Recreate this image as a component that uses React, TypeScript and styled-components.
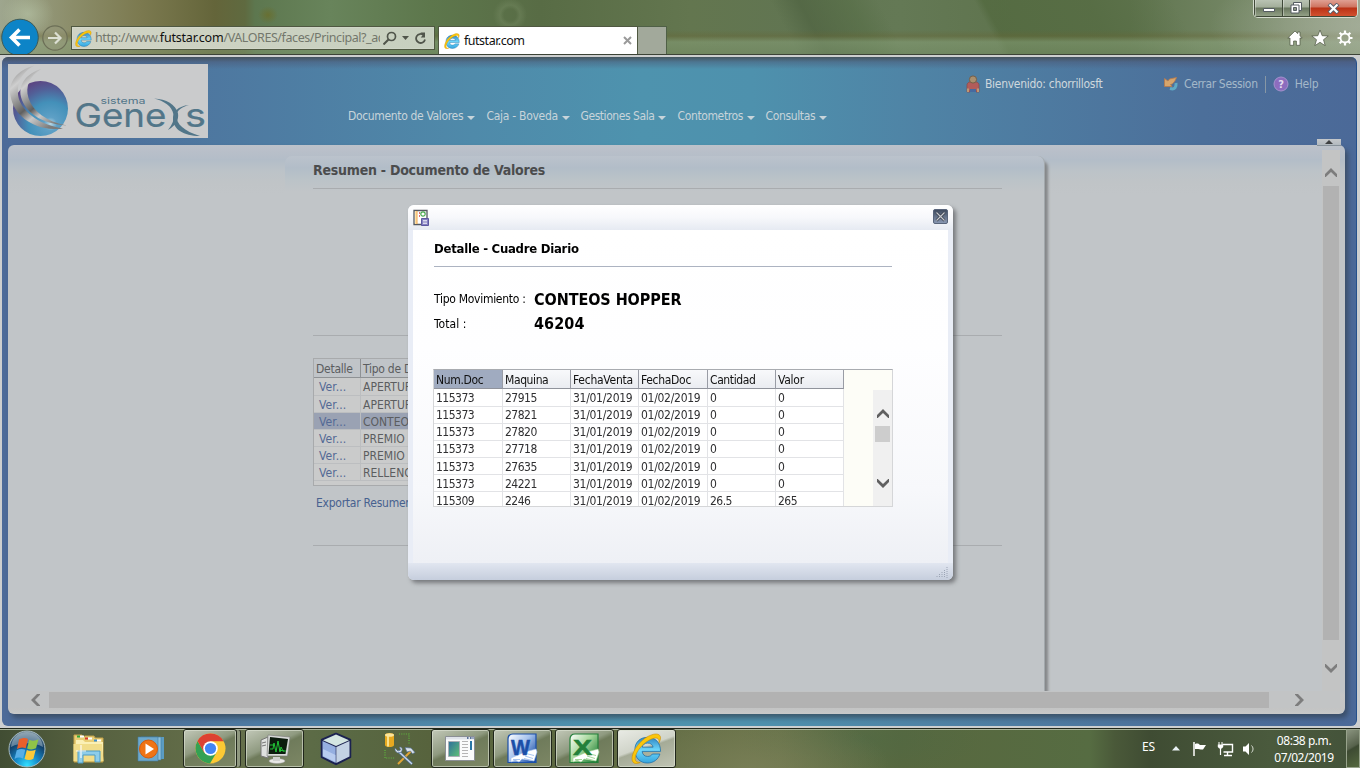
import React from "react";
import styled, { createGlobalStyle } from "styled-components";

const GlobalStyle = createGlobalStyle`
  * { box-sizing: border-box; }
  html, body { margin: 0; padding: 0; }
  body { width: 1360px; height: 768px; overflow: hidden; font-family: "DejaVu Sans Condensed", "DejaVu Sans", sans-serif; font-stretch: condensed; }
  svg { display: block; flex: none; }
`;

const Screen = styled.div`
  width: 1360px;
  height: 768px;
  display: flex;
  flex-direction: column;
  overflow: hidden;
  background: #c8cacb;
`;

/* ---------- browser chrome ---------- */

const Chrome = styled.header`
  position: relative;
  height: 54px;
  flex: none;
  display: flex;
  align-items: flex-start;
  background:
    radial-gradient(ellipse 26px 22px at 28px 14px, rgba(190, 205, 175, 0.5), transparent),
    radial-gradient(ellipse 10px 9px at 268px 15px, rgba(110, 105, 30, 0.6), transparent),
    radial-gradient(circle at 510px 15px, transparent 6px, rgba(130, 150, 110, 0.3) 10px, transparent 17px),
    radial-gradient(ellipse 150px 60px at 1360px 25px, rgba(165, 175, 155, 0.75), transparent),
    linear-gradient(180deg, transparent 30px, rgba(104, 100, 50, 0.35) 36px, rgba(140, 165, 125, 0.5) 42px, rgba(130, 155, 115, 0.45) 54px),
    linear-gradient(62deg, transparent 705px, rgba(76, 96, 62, 0.6) 730px, rgba(84, 108, 68, 0.5) 775px, transparent 800px, transparent 885px, rgba(80, 103, 60, 0.65) 893px, rgba(80, 103, 60, 0.5) 985px, transparent 1060px),
    linear-gradient(90deg, #9ea68e 0, #8c8e6b 70px, #7c7a50 140px, #64653a 215px, #5f6a40 245px, #5d774f 255px, #68845b 330px, #5d774c 430px, #586c45 540px, #63764f 690px, #617552 800px, #647955 900px, #5f744e 1010px, #5f744e 1130px, #788a69 1260px, #98a189 1360px);
`;

const BackButton = styled.div`
  width: 38px;
  height: 54px;
  margin-left: 1px;
  overflow: hidden;
`;

const ForwardButton = styled.div`
  margin: 25px 0 0 3px;
  width: 26px;
`;

const AddressBar = styled.div`
  width: 364px;
  height: 24px;
  margin: 26px 0 0 3px;
  padding: 0 5px 0 3px;
  display: flex;
  align-items: center;
  border: 1px solid #4f5841;
  background: linear-gradient(90deg, #d0d3c4, #c7d0bf);
  box-shadow: 0 0 0 1px rgba(255, 255, 255, 0.12) inset;
`;

const Url = styled.div`
  margin-left: 3px;
  width: 285px;
  overflow: hidden;
  white-space: nowrap;
  font: 12.5px/22px "Noto Sans", sans-serif;
  letter-spacing: -0.42px;
  color: #73776c;
  b { font-weight: 400; color: #101010; letter-spacing: -0.2px; }
`;

const UrlTools = styled.div`
  display: flex;
  align-items: center;
  gap: 5px;
  margin-left: 3px;
`;

const Tab = styled.div`
  width: 200px;
  height: 28px;
  margin: 26px 0 0 3px;
  padding: 0 5px 0 5px;
  display: flex;
  align-items: center;
  border: 1px solid #4f5841;
  border-bottom: 0;
  background: #fff;
`;

const TabTitle = styled.span`
  flex: 1;
  margin-left: 4px;
  font: 12.5px/27px "Noto Sans", sans-serif;
  letter-spacing: -0.48px;
  color: #111;
`;

const NewTab = styled.div`
  width: 29px;
  height: 28px;
  margin-top: 26px;
  border: 1px solid #4f6046;
  border-left: 0;
  border-bottom: 0;
  background: #a2a99b;
`;

const ChromeRight = styled.div`
  width: 108px;
  margin: 0 2px 0 auto;
  display: flex;
  flex-direction: column;
  align-items: flex-end;
`;

const WindowButtons = styled.div`
  display: flex;
  width: 105px;
  height: 18px;
  overflow: hidden;
  border: 1px solid #d5dccf;
  border-top: 0;
  border-radius: 0 0 5px 5px;
`;

const WindowButton = styled.div<{ $w: number; $close?: boolean }>`
  width: ${(p) => p.$w}px;
  display: flex;
  align-items: center;
  justify-content: center;
  border: 1px solid #3f4938;
  border-top: 0;
  border-right-width: 0;
  background: ${(p) =>
    p.$close
      ? "linear-gradient(180deg, #e0a093 0, #ce7460 7px, #ba3216 8px, #d2512f 100%)"
      : "linear-gradient(180deg, #b9c3b3 0, #a3ae9b 7px, #69775e 8px, #92a086 100%)"};
  box-shadow: inset 1px 0 0 rgba(255, 255, 255, 0.35);
`;

const ChromeIcons = styled.div`
  display: flex;
  gap: 8px;
  margin: 12px 5px 0 0;
`;

/* ---------- application page ---------- */

const Page = styled.main`
  height: 674px;
  flex: none;
  padding: 3px 3px 2px 2px;
  border-top: 1px solid #3c4336;
  background: #cdcfcf;
`;

const AppShell = styled.div`
  position: relative;
  height: 669px;
  margin-top: -1px;
  padding: 0 12px 0 6px;
  border-radius: 6px;
  border-right: 1px solid #24508c;
  background:
    linear-gradient(180deg, rgba(68, 76, 82, 0.85) 0, rgba(75, 84, 112, 0.45) 5px, transparent 12px),
    linear-gradient(90deg, #4d6b99 0, #4d6d9a 60px, #4f8aaa 470px, #4e93ae 640px, #4e91ad 750px, #4f83a5 920px, #4c6f9a 1200px, #4b6998 1356px);
`;

const Masthead = styled.div`
  height: 88px;
  display: flex;
`;

const Logo = styled.div`
  margin-top: 7px;
  width: 200px;
  height: 74px;
  background: #cacbcc;
`;

const MastContent = styled.div`
  flex: 1;
  display: flex;
  flex-direction: column;
`;

const UserRow = styled.div`
  display: flex;
  align-items: center;
  height: 20px;
  margin: 17px 0 0 757px;
  font-size: 12px;
  letter-spacing: -0.29px;
  white-space: nowrap;
  color: #ced8dd;
`;

const UserName = styled.span`
  width: 178px;
  margin-left: 4px;
`;

const MastLink = styled.span<{ $ml: number; $ls?: number }>`
  margin-left: ${(p) => p.$ml}px;
  letter-spacing: ${(p) => p.$ls ?? -0.35}px;
  color: #a4b8c9;
`;

const LinkDivider = styled.i`
  width: 1px;
  height: 17px;
  margin: 0 7px 0 7px;
  background: #8797a5;
`;

const Menu = styled.nav`
  display: flex;
  margin: 12px 0 0 140px;
  font-size: 12px;
  line-height: 20px;
  color: #c7d4da;
  white-space: nowrap;
`;

const MenuItem = styled.span<{ $w: number; $ls: number }>`
  width: ${(p) => p.$w}px;
  letter-spacing: ${(p) => p.$ls}px;
  display: flex;
  align-items: center;
  &::after {
    content: "";
    margin: 4px 0 0 4px;
    border: 4px solid transparent;
    border-bottom-width: 0;
    border-top-color: #c7d4da;
  }
`;

const Panel = styled.section`
  height: 569px;
  width: 1337px;
  display: grid;
  grid-template-columns: 1314px 18px;
  grid-template-rows: 541px 17px;
  padding-top: 5px;
  border-radius: 6px;
  overflow: hidden;
  background: linear-gradient(180deg, #bdc2ca 0, #b8bfc9 7px, #b3bdc8 15px, #bcc3c8 26px, #c0c4c7 38px, #c1c5c8 50px, #c1c5c8 546px, #c5c6c7 550px, #c3c4c4 564px, #c8c9c9 569px);
  box-shadow: 3px 4px 5px rgba(50, 65, 80, 0.65);
`;

const PanelBody = styled.div`
  padding: 6px 0 0 277px;
  overflow: hidden;
`;

const Card = styled.div`
  width: 760px;
  height: 540px;
  padding: 3px 42px 0 28px;
  border-radius: 7px 7px 0 0;
  border-right: 1px solid #a2a8ac;
  background: linear-gradient(180deg, #bbc3cc 0, #b2bdc8 12px, #bbc3c8 24px, #c1c5c8 36px);
  box-shadow: 4px 4px 3px -1px #858789;
  font-size: 12px;
`;

const CardTitle = styled.h1`
  height: 30px;
  margin: 0;
  border-bottom: 1px solid #a9acaf;
  font-size: 14px;
  font-weight: 700;
  line-height: 22px;
  letter-spacing: -0.24px;
  color: #4b4c4d;
`;

const CardGap = styled.div<{ $h: number }>`
  height: ${(p) => p.$h}px;
  border-bottom: 1px solid #a9acaf;
`;

const Summary = styled.div`
  width: 400px;
  height: 128px;
  margin-top: 22px;
  border: 1px solid #a8aaac;
  background: #cacbcb;
`;

const SummaryRow = styled.div<{ $head?: boolean; $active?: boolean; $h: number; $lh?: number }>`
  height: ${(p) => p.$h}px;
  display: grid;
  grid-template-columns: 47px 1fr;
  grid-template-rows: 100%;
  line-height: ${(p) => p.$lh ?? p.$h}px;
  letter-spacing: ${(p) => (p.$head ? -0.25 : 0)}px;
  white-space: nowrap;
  color: #5b5d5f;
  border-bottom: 1px solid ${(p) => (p.$head ? "#8f9295" : "#bcbec0")};
  background: ${(p) => (p.$active ? "#9aa2b3" : p.$head ? "#c0c4c8" : "transparent")};
`;

const SummaryCell = styled.span<{ $link?: boolean; $head?: boolean }>`
  padding-left: ${(p) => (p.$link ? 5 : 2)}px;
  border-right: 1px solid ${(p) => (p.$head ? "#8f9295" : "#bcbec0")};
  overflow: hidden;
  color: ${(p) => (p.$link ? "#536995" : "inherit")};
  letter-spacing: ${(p) => (p.$link ? "0.1px" : "inherit")};
`;

const ExportLink = styled.div`
  height: 60px;
  padding: 9px 0 0 3px;
  line-height: 16px;
  letter-spacing: -0.25px;
  border-bottom: 1px solid #a9acaf;
  color: #47618f;
`;

const VScroll = styled.div`
  height: 541px;
  display: flex;
  flex-direction: column;
  align-items: center;
  background: #c3c4c4;
`;

const HScroll = styled.div`
  grid-column: 1 / 3;
  display: flex;
  align-items: center;
  background: #c2c4c5;
`;

const VThumb = styled.div`
  width: 16px;
  height: 454px;
  margin: 9px 0 24px;
  background: #b2b2b2;
`;

const HThumb = styled.div`
  width: 1220px;
  height: 16px;
  margin: 0 26px 0 9px;
  background: #b2b2b2;
`;

const Collapser = styled.div`
  position: absolute;
  left: 1315px;
  top: 82px;
  width: 24px;
  height: 7px;
  display: flex;
  align-items: center;
  justify-content: center;
  background: linear-gradient(#c4c7ca, #b2b9bf);
  border-bottom: 1px solid #87919a;
`;

/* ---------- dialog ---------- */

const Dialog = styled.div`
  position: absolute;
  left: 406px;
  top: 148px;
  width: 545px;
  height: 375px;
  display: flex;
  flex-direction: column;
  border-radius: 6px;
  overflow: hidden;
  background: #e9edf6;
  filter: drop-shadow(3px 3px 2px rgba(70, 72, 75, 0.6));
`;

const DialogHeader = styled.div`
  height: 25px;
  padding: 4px 5px 0;
  display: flex;
  justify-content: space-between;
  background: linear-gradient(#ffffff, #f7f8fb 50%, #e6eaf2);
`;

const DialogBody = styled.div`
  height: 333px;
  margin: 0 5px;
  padding: 7px 56px 0 21px;
  background: linear-gradient(#ffffff 0, #fefeff 120px, #f7f8fb 260px, #eef0f5 333px);
`;

const DialogFooter = styled.div`
  height: 17px;
  display: flex;
  justify-content: flex-end;
  padding: 3px 5px 0 0;
  background: linear-gradient(#e1e6f0, #c6cedd);
`;

const DialogTitle = styled.h2`
  height: 30px;
  margin: 0;
  border-bottom: 1px solid #acb3c1;
  font-size: 13px;
  line-height: 23px;
  font-weight: 700;
  letter-spacing: -0.25px;
  color: #000;
`;

const Fields = styled.dl`
  display: grid;
  grid-template-columns: 100px 1fr;
  grid-auto-rows: 24.5px;
  align-items: center;
  margin: 20px 0 33px;
  color: #000;
`;

const FieldName = styled.dt<{ $ls: number }>`
  font-size: 12px;
  white-space: nowrap;
  letter-spacing: ${(p) => p.$ls}px;
`;

const FieldValue = styled.dd<{ $ls: number }>`
  margin: 0;
  font-size: 16px;
  font-weight: 700;
  white-space: nowrap;
  letter-spacing: ${(p) => p.$ls}px;
`;

const Grid = styled.div`
  width: 460px;
  height: 138px;
  margin-left: -1px;
  display: flex;
  border: 1px solid #d5d6d8;
  border-top-color: #a8abb0;
  background: #fdfdf7;
  overflow: hidden;
  font-size: 12px;
`;

const GridColumns = styled.div`
  width: 410px;
`;

const GridRow = styled.div<{ $h: number }>`
  height: ${(p) => p.$h}px;
  display: grid;
  grid-template-columns: 69px 68px 68px 69px 68px 68px;
  grid-template-rows: 100%;
  background: #fff;
`;

const HeadCell = styled.span<{ $selected?: boolean; $ls: number }>`
  padding-left: 2px;
  line-height: 20px;
  letter-spacing: ${(p) => p.$ls}px;
  white-space: nowrap;
  color: #111;
  border-right: 1px solid #999ca5;
  border-bottom: 1px solid #90939c;
  background: ${(p) => (p.$selected ? "#a0abc0" : "linear-gradient(#f8f9fb, #eaecf1)")};
`;

const Cell = styled.span<{ $lh: number; $ls?: number }>`
  padding: 0 0 0 2px;
  line-height: ${(p) => p.$lh}px;
  letter-spacing: ${(p) => p.$ls ?? -0.52}px;
  white-space: nowrap;
  color: #2f2f31;
  border-right: 1px solid #e2e3e6;
  border-bottom: 1px solid #e2e3e6;
`;

const GridScroll = styled.div`
  width: 19px;
  margin: 20px 0 0 auto;
  padding-top: 18px;
  display: flex;
  flex-direction: column;
  align-items: center;
  background: #f0f0f0;
`;

const GridThumb = styled.div`
  width: 15px;
  height: 16px;
  margin: 8px 0 37px;
  background: #cdcdcd;
`;

/* ---------- taskbar ---------- */

const Taskbar = styled.footer`
  height: 40px;
  flex: none;
  display: flex;
  align-items: flex-start;
  border-top: 1px solid #20271a;
  box-shadow: inset 0 1px 0 #a9b39b;
  background:
    radial-gradient(ellipse 140px 60px at 750px 40px, rgba(125, 130, 90, 0.75), transparent),
    radial-gradient(ellipse 120px 40px at 860px 10px, rgba(75, 105, 70, 0.5), transparent),
    linear-gradient(90deg, #414d33 0, #55603f 80px, #66704b 230px, #5a6a45 330px, #57633d 430px, #606b43 640px, #6a7349 780px, #58683f 900px, #566c42 1090px, #4a5939 1115px, #3f4c33 1150px, #4a5a3d 1270px, #44533a 1350px);
`;

const TaskSlot = styled.div<{ $w: number }>`
  width: ${(p) => p.$w}px;
  height: 39px;
  display: flex;
  align-items: center;
  justify-content: center;
`;

const TaskButton = styled.div<{ $w?: number; $ml: number; $active?: boolean; $stack?: boolean }>`
  width: ${(p) => p.$w ?? 59}px;
  height: 39px;
  margin-left: ${(p) => p.$ml}px;
  display: flex;
  align-items: center;
  justify-content: center;
  border: 1px solid #20261b;
  border-radius: 3px;
  background: ${(p) =>
    p.$active
      ? "linear-gradient(160deg, #e9ebe5 0, #d0d4c9 45%, #a5ab97 50%, #c0c4b4 100%)"
      : "linear-gradient(155deg, #c2c8b8 0, #8f9a80 42%, #6f7b5b 50%, #7d8765 100%)"};
  box-shadow: inset 0 0 0 1px rgba(220, 226, 210, 0.65)${(p) => (p.$stack ? ", 4px 0 0 -1px #8f987f, 5px 0 0 -1px #2a3024" : "")};
`;

const Tray = styled.div`
  margin-left: auto;
  display: flex;
  align-items: center;
  height: 39px;
  color: #fff;
  font: 12px/17px "Noto Sans", sans-serif;
`;

const Language = styled.span`
  width: 30px;
  font-size: 12px;
  letter-spacing: -0.2px;
  padding-bottom: 4px;
`;

const TrayIcons = styled.div`
  width: 101px;
  display: flex;
  align-items: center;
`;

const Clock = styled.div`
  width: 62px;
  text-align: center;
  letter-spacing: -0.45px;
  white-space: nowrap;
`;

const ShowDesktop = styled.div`
  width: 14px;
  height: 39px;
  margin-left: 11px;
  border: 1px solid #98a38c;
  background: linear-gradient(150deg, #8a947f 0, #57624c 45%, #3d4a32 50%, #55683f 100%);
`;

/* ---------- drawings ---------- */

const IeIcon = ({ size, id }: { size: number; id: string }) => (
  <svg width={size} height={size} viewBox="0 0 32 32">
    <defs>
      <linearGradient id={id} x1="0" y1="0" x2="0" y2="1">
        <stop offset="0" stopColor="#2f86c4" />
        <stop offset="0.5" stopColor="#6fd8fb" />
        <stop offset="1" stopColor="#35a4dd" />
      </linearGradient>
    </defs>
    <path d="M30.500 19H11.500c.4 3.300 2.500 5.200 5.600 5.200 2.300 0 4-.9 5-2.500h7.700C28.200 27 23.500 31 17 31 9.200 31 4 25.500 4 17.500S9.200 4.500 17 4.500c8.200 0 13.500 5.300 13.500 14.500zM11.600 14.600h11.200c-.5-2.700-2.700-4.200-5.600-4.200-3 0-5 1.500-5.600 4.200z" fill={`url(#${id})`} stroke="#1c6ea8" strokeWidth="0.800" />
    <path d="M9.500 30.500C2.500 33.500-.5 29.500 1.800 22 4.500 13.500 12.500 5 21 2c5.500-2 9.500-.8 9.500 3 0 1.500-.5 3.200-1.500 5 .3-4-1.500-5.500-5.500-4.500C17 7.200 9.500 13.500 6 20.500c-3 6.200-2.300 9.800 3.500 10z" fill="#fbc60b" stroke="#c98b06" strokeWidth="0.600" />
  </svg>
);

const Chevron = ({ dir, color }: { dir: "up" | "down" | "left" | "right"; color: string }) => {
  const vertical = dir === "up" || dir === "down";
  const d = {
    up: "M0 7 6 1l6 6v3h-.8L6 5 .8 10H0z",
    down: "M0 0h.8L6 5l5.200-5h.8v3L6 9 0 3z",
    left: "M10 0v.8L5 6l5 5.200v.8H7L1 6l6-6z",
    right: "M0 0v.8L5 6 0 11.200v.8h3l6-6-6-6z",
  }[dir];
  return (
    <svg width={vertical ? 12 : 10} height={vertical ? 10 : 12}>
      <path d={d} fill={color} />
    </svg>
  );
};

const GenexsLogo = () => (
  <svg width="200" height="74" viewBox="0 0 200 74">
    <defs>
      <radialGradient id="orb" cx="0.68" cy="0.78" r="0.8">
        <stop offset="0" stopColor="#b9d8e6" />
        <stop offset="0.15" stopColor="#5ea0c6" />
        <stop offset="0.5" stopColor="#4390b9" />
        <stop offset="0.8" stopColor="#525f97" />
        <stop offset="1" stopColor="#5b4784" />
      </radialGradient>
      <linearGradient id="steel" x1="0" y1="0" x2="0.7" y2="1">
        <stop offset="0" stopColor="#777" />
        <stop offset="0.25" stopColor="#cfcfcf" />
        <stop offset="0.45" stopColor="#919191" />
        <stop offset="0.6" stopColor="#606060" />
        <stop offset="0.75" stopColor="#c8c8c8" />
        <stop offset="1" stopColor="#7b7b7b" />
      </linearGradient>
    </defs>
    <circle cx="32.500" cy="44.500" r="27.500" fill="url(#orb)" />
    <path d="M26.500 1.500C9 6 0 18 2.500 32c3 18 20 32 43 33 5 .2 8-.1 9.500-.6C33 61 17 50 11.500 36.500 7 23 12 9 26.500 1.500z" fill="url(#steel)" />
    <path d="M33.500 5C19 9 10 20 13 33c4 15 20 27 46 28.500-21-4-34-14-38.500-27.500C17 23 21.500 11.500 33.500 5z" fill="url(#steel)" />
    <g fill="#527689" stroke="#527689" fontFamily="Inter, 'DejaVu Sans', sans-serif">
      <text x="92.500" y="39.500" fontSize="9" strokeWidth="0" textLength="45" lengthAdjust="spacingAndGlyphs">sistema</text>
      <text x="66.500" y="62.500" fontSize="33" strokeWidth="0.200" textLength="92" lengthAdjust="spacingAndGlyphs">Gene</text>
      <text x="177" y="62.500" fontSize="33" strokeWidth="0.200" textLength="21" lengthAdjust="spacingAndGlyphs">s</text>
    </g>
    <path d="M146 34.500c12 .5 22 6 24 15 1 6-2 12-10 16.500 4-5 6.500-10 5.500-15.500C164 42 156 37 146 34.500z" fill="#527689" />
    <path d="M181 41c-7 2-12 5-12.500 10.500C168 60 176 67 192 72c-17 0-26.500-7-27-16.500C164.500 48 170 42 181 41z" fill="#527689" />
  </svg>
);

const HomeStarGear = () => (
  <ChromeIcons>
    <svg width="16" height="16"><path d="M8 1 .8 8H3v7.300h3.600V11h2.800v4.300H13V8h2.200L13 5.800V2h-2.300v1.600z" fill="#fff" stroke="#4c5440" strokeWidth="0.700" /></svg>
    <svg width="18" height="16"><path d="m9 0 2.200 5.700 6 .3-4.700 3.700 1.700 6L9 12.300l-5.200 3.400 1.700-6L.8 6l6-.3z" fill="#fff" stroke="#4c5440" strokeWidth="0.700" /></svg>
    <svg width="16" height="16" viewBox="0 0 16 16"><g stroke="#fff" fill="none"><circle cx="8" cy="8" r="4.500" strokeWidth="1.800" /><path d="M8 .5v3M8 12.500v3M.5 8h3M12.500 8h3M2.700 2.700l2 2M11.300 11.300l2 2M2.700 13.300l2-2M11.300 4.700l2-2" strokeWidth="2.200" /></g></svg>
  </ChromeIcons>
);

const StartOrb = () => (
  <svg width="38" height="38" viewBox="0 0 38 38">
    <defs>
      <radialGradient id="startorb" cx="0.5" cy="0.95" r="0.95">
        <stop offset="0" stopColor="#32e0ff" />
        <stop offset="0.35" stopColor="#1688c8" />
        <stop offset="0.7" stopColor="#123f68" />
        <stop offset="1" stopColor="#6f8593" />
      </radialGradient>
    </defs>
    <circle cx="19" cy="19" r="18" fill="url(#startorb)" stroke="#a6bac0" />
    <path d="M3 17C4 7 11 2 19 2s15 5 16 15c-9-5-23-5-32 0z" fill="#d8e5ea" opacity="0.400" />
    <path d="M11 9.500c3.500-2 6.500-2 9-.5l-2.300 9.200c-3-1.300-5.800-1-8.700.8z" fill="#e8602c" />
    <path d="M21.300 9.700c3.200 1.500 6.200 1.200 9.200-.5L28 18.300c-3 1.500-6 1.500-8.900.2z" fill="#8fc348" />
    <path d="M8.700 20.300c3-1.700 5.800-1.800 8.600-.6L15 28.500c-3-1.400-5.800-1.200-8.500.4z" fill="#57aee6" />
    <path d="M18.800 19.900c3 1.300 5.900 1.300 8.900-.2l-2.300 9c-2.900 1.600-5.900 1.600-8.900.2z" fill="#fbc93a" />
  </svg>
);

const FolderIcon = () => (
  <svg width="34" height="32" viewBox="0 0 34 32">
    <path d="M2 5V2h8l1 2 2-1h9l1 2h8v24H2z" fill="#e9ce75" stroke="#c3a24a" />
    <path d="M4 7h7l2 2h18v18H4z" fill="#fbf0b5" />
    <path d="M1.500 11H30l1.500 17h-30z" fill="#f1dd8a" />
    <path d="M5 2.500h3v2H5z" fill="#2fa63b" /><path d="M8 2.500h4v2H8zM16 4.500h4v2h-4zM25 6.500h4v2h-4z" fill="#fff" /><path d="M13 4.500h3v2h-3z" fill="#d83b2e" /><path d="M22 6.500h3v2h-3z" fill="#3c8fd0" />
    <path d="M6 18h22v11h-5v-7H11v8H6z" fill="#8dcdea" stroke="#4d9bc4" />
    <path d="M9 12v13M4 18h10" stroke="#fff" strokeWidth="1.200" opacity="0.900" />
  </svg>
);

const MediaIcon = () => (
  <svg width="28" height="28" viewBox="0 0 28 28">
    <path d="M6 2h21v22H6z" fill="#5b9cc2" /><path d="M4 2h20v23H4z" fill="#8ec0dc" stroke="#3f7ea6" strokeWidth="0.600" /><path d="M1 2h20v24H1z" fill="#6ea9cc" stroke="#3f7ea6" strokeWidth="0.600" />
    <circle cx="11.500" cy="14" r="9" fill="#ef7416" stroke="#d55c0a" />
    <path d="M8.500 8.500 17 14l-8.500 5.500z" fill="#fff" />
  </svg>
);

const ChromeIcon = () => (
  <svg width="31" height="31" viewBox="0 0 32 32">
    <circle cx="16" cy="16" r="15.500" fill="#fcc934" />
    <path d="M2.600 8.200A15.500 15.500 0 0 0 15.500 31.500L22.500 19.700 16 23 9.700 20.500z" fill="#34a153" />
    <path d="M2.600 8.200 9.500 20 16 16l0-7.500h13.500A15.500 15.500 0 0 0 2.600 8.200z" fill="#dd4132" />
    <circle cx="16" cy="16" r="7.500" fill="#fff" /><circle cx="16" cy="16" r="5.800" fill="#4285f4" />
  </svg>
);

const MonitorIcon = () => (
  <svg width="32" height="30" viewBox="0 0 32 30">
    <path d="m2 6 7-3v21l-7-2z" fill="#dfe1df" stroke="#777" /><path d="m3 9 4-1M3 12l4-1" stroke="#777" />
    <path d="m9 1 22 2-2.500 19L8 22z" fill="#d8dad8" stroke="#777" strokeWidth="0.600" />
    <path d="m11 3 18 2-2.500 15L9.500 20z" fill="#0c1c0e" />
    <path d="M11 15h3l1-6 2 9 2-11 2 11 1-5 2 4h3M11 11h4M20 16l5 1" stroke="#23d43a" fill="none" strokeWidth="0.900" />
    <ellipse cx="18" cy="27" rx="8" ry="2.500" fill="#e8e8e6" stroke="#999" strokeWidth="0.500" /><path d="M14 23h7v4h-7z" fill="#cfd0ce" />
  </svg>
);

const CubeIcon = () => (
  <svg width="32" height="34" viewBox="0 0 32 34">
    <path d="m16 2 14 6v17L16 32 2 25V8z" fill="#1d2450" stroke="#1b2250" strokeWidth="2.500" strokeLinejoin="round" />
    <path d="m16 2.500 13 5.800L16 14 3 8.300z" fill="#d4e6e2" /><path d="m2.500 9 13.200 6v16L2.500 24.500z" fill="#95afe0" /><path d="m29.500 9-13.200 6v16l13.200-6.500z" fill="#c3d2e4" />
    <path d="M3 17l12.500 6v7L3 24z" fill="#c7d9f5" opacity="0.700" />
  </svg>
);

const ToolsIcon = () => (
  <svg width="34" height="34" viewBox="0 0 34 34">
    <path d="M2 3c0-2.700 9-2.700 9 0v10c0 2.700-9 2.700-9 0z" fill="#e7a91f" /><path d="M5 3.500v11" stroke="#fbe08a" strokeWidth="2" /><ellipse cx="6.500" cy="3" rx="4.500" ry="1.800" fill="#fbe59c" />
    <path d="M16 2h10v10M2 18v8h10" fill="none" stroke="#5fb83d" strokeWidth="1.200" strokeDasharray="1 1.300" />
    <path d="M29 18 15 32" stroke="#e0a437" strokeWidth="2" />
    <path d="m15 19 14 13" stroke="#53739f" strokeWidth="2.600" /><path d="m15 19 14 13" stroke="#cfdcea" strokeWidth="1.200" />
    <path d="M12 16l3 3 2.500-1-1-3c3 0 3.500 2.500 1.700 5.200-3 1-6.700.5-6.200-4.200zM22 15.500l6 .5 4 4.500-2.500 1.200-2-2.700-3.500 1z" fill="#dce4ec" stroke="#536f92" strokeWidth="0.700" />
  </svg>
);

const WindowIcon = () => (
  <svg width="31" height="26" viewBox="0 0 31 26">
    <defs><linearGradient id="shot" x1="0" y1="0" x2="1" y2="1"><stop stopColor="#2d6f9c" /><stop offset="1" stopColor="#5fc076" /></linearGradient></defs>
    <path d="M.5.500h29v24H.500z" fill="#fafbfb" stroke="#8b8f95" /><path d="M1 1h28v2.500H1z" fill="#dfe3ea" />
    <path d="M22 2h1.500M25 2h1.500M27.500 2h1" stroke="#2f4d80" strokeWidth="1.500" />
    <path d="M3.500 5.500h11v15h-11z" fill="url(#shot)" stroke="#a9aeb5" />
    <path d="M17 5.500h6M17 8.500h6M17 11.500h6M17 14.500h6M17 17.500h6M17 20.500h6" stroke="#b5b5b5" /><path d="M26 5v9" stroke="#2876a6" strokeWidth="2" />
  </svg>
);

const OfficeIcon = ({ letter, dark, light, id }: { letter: string; dark: string; light: string; id: string }) => (
  <svg width="31" height="31" viewBox="0 0 31 31">
    <defs><linearGradient id={id} x1="0" y1="0" x2="1" y2="0.800"><stop stopColor="#fff" /><stop offset="0.500" stopColor={light} /><stop offset="1" stopColor={dark} /></linearGradient></defs>
    <path d="M6 1h23v28.500H1V6c0-3 2-5 5-5z" fill={`url(#${id})`} stroke={dark} strokeWidth="1.200" />
    <path d="m4 25 14-6 11-3 1 3-3 9-12-2-3 3-4-2-4 2z" fill="#fff" stroke={light} strokeWidth="0.600" />
    <path d="m19 20.500 8 2M18 23l8 2.500M17 25.500l8 2M6 26.500h7" stroke={light} />
    <text x="4" y="21.500" fontFamily="'Liberation Sans', sans-serif" fontSize="22" fontWeight="700" fill={dark} stroke={dark} strokeWidth="0.500" textLength="19" lengthAdjust="spacingAndGlyphs">{letter}</text>
  </svg>
);

/* ---------- data ---------- */

const menu = [
  { label: "Documento de Valores", w: 138.500, ls: -0.34 },
  { label: "Caja - Boveda", w: 94, ls: -0.28 },
  { label: "Gestiones Sala", w: 97, ls: -0.44 },
  { label: "Contometros", w: 88, ls: -0.37 },
  { label: "Consultas", w: 80, ls: -0.36 },
];

const summary = ["APERTURA", "APERTURA", "CONTEOS HOPPER", "PREMIO", "PREMIO", "RELLENO"];

const heads = [
  ["Num.Doc", -0.35],
  ["Maquina", -0.4],
  ["FechaVenta", -0.25],
  ["FechaDoc", -0.3],
  ["Cantidad", -0.4],
  ["Valor", -0.25],
] as const;

const rows = [
  ["115373", "27915", "0", "0"],
  ["115373", "27821", "0", "0"],
  ["115373", "27820", "0", "0"],
  ["115373", "27718", "0", "0"],
  ["115373", "27635", "0", "0"],
  ["115373", "24221", "0", "0"],
  ["115309", "2246", "26.5", "265"],
];

const rowLines = [18, 17, 17, 17, 19, 19, 19];

export default function App() {
  return (
    <>
      <GlobalStyle />
      <Screen>
        <Chrome>
          <BackButton>
            <svg width="38" height="56">
              <circle cx="19" cy="37.500" r="18.300" fill="#0d84c7" stroke="#405a55" />
              <path d="M29 37.500H11M18.500 29.500l-8 8 8 8" fill="none" stroke="#fff" strokeWidth="3.600" />
            </svg>
          </BackButton>
          <ForwardButton>
            <svg width="26" height="26">
              <circle cx="13" cy="13" r="12.200" fill="rgba(150,152,125,.45)" stroke="#6c6f57" strokeWidth="1.200" />
              <path d="M6 13h12M13 7.500l5.500 5.500-5.500 5.500" fill="none" stroke="#dcdfd3" strokeWidth="2.200" />
            </svg>
          </ForwardButton>
          <AddressBar>
            <IeIcon size={17} id="ieaddr" />
            <Url>http://www.<b>futstar.com</b>/VALORES/faces/Principal?_adf</Url>
            <UrlTools>
              <svg width="14" height="14"><circle cx="8.500" cy="5.500" r="4" fill="none" stroke="#50554b" strokeWidth="1.700" /><path d="m5.500 8.500-5 5" stroke="#50554b" strokeWidth="2" /></svg>
              <svg width="8" height="5"><path d="M0 0h7L3.500 4z" fill="#50554b" /></svg>
              <svg width="12" height="13"><path d="M8.500 3A4.500 4.500 0 1 0 10 7.500" fill="none" stroke="#50554b" strokeWidth="1.800" /><path d="M5.500.500H10v5H5.800l2-2.500z" fill="#50554b" /></svg>
            </UrlTools>
          </AddressBar>
          <Tab>
            <IeIcon size={16} id="ietab" />
            <TabTitle>futstar.com</TabTitle>
            <svg width="9" height="9"><path d="m1 1 7 7M8 1 1 8" stroke="#9a9a9a" strokeWidth="2" /></svg>
          </Tab>
          <NewTab />
          <ChromeRight>
            <WindowButtons>
              <WindowButton $w={28}><svg width="12" height="6" style={{ marginTop: 3 }}><path d="M.5 1.500h11v3H.500z" fill="#fff" stroke="#555d62" /></svg></WindowButton>
              <WindowButton $w={27}><svg width="13" height="12"><path d="M3.500.500h8v8h-8z" fill="#fff" stroke="#555d62" /><path d="M1 3h8v8H1z" fill="#fff" stroke="#555d62" /><path d="M3.500 5.500h3v3h-3z" fill="#8b9581" stroke="#555d62" /></svg></WindowButton>
              <WindowButton $w={48} $close><svg width="13" height="11" viewBox="0 0 13 11"><path d="m2 1 9 9M11 1l-9 9" stroke="#565d6b" strokeWidth="4" /><path d="m2.500 1.500 8 8M10.500 1.500l-8 8" stroke="#fff" strokeWidth="2.200" /></svg></WindowButton>
            </WindowButtons>
            <HomeStarGear />
          </ChromeRight>
        </Chrome>

        <Page>
          <AppShell>
            <Masthead>
              <Logo><GenexsLogo /></Logo>
              <MastContent>
                <UserRow>
                  <svg width="16" height="18" viewBox="0 0 16 18"><path d="M2 17V10c0-2 2-3.500 6-3.500s6 1.500 6 3.500v7h-3v-2H5v2z" fill="#b25c5a" stroke="#8c4845" strokeWidth="0.700" /><circle cx="8" cy="4.500" r="3.600" fill="#a98f6e" stroke="#765f48" /><path d="M5 14h6v3H5z" fill="#476a9f" /><path d="M2 13.500h2V17H2zM12 13.500h2V17h-2z" fill="#bc9874" /></svg>
                  <UserName>Bienvenido: chorrillosft</UserName>
                  <svg width="16" height="16" viewBox="0 0 16 16"><path d="M7 12.500c5 1.500 6.500-1.500 6-5.500" fill="none" stroke="#5faac5" strokeWidth="3" /><path d="M1.500 2.500v8h7.500L7.500 8.500c2-.2 4-2 6-7L6.500 3 5 5z" fill="#d6a56c" stroke="#b87a4a" strokeWidth="0.800" /></svg>
                  <MastLink $ml={5}>Cerrar Session</MastLink>
                  <LinkDivider />
                  <svg width="16" height="16"><circle cx="8" cy="8" r="7" fill="#8d6dbe" stroke="#a492cd" /><text x="8" y="12" textAnchor="middle" fontSize="11" fontWeight="700" fill="#e4def0">?</text></svg>
                  <MastLink $ml={6} $ls={-0.2}>Help</MastLink>
                </UserRow>
                <Menu>
                  {menu.map((m) => <MenuItem key={m.label} $w={m.w} $ls={m.ls}>{m.label}</MenuItem>)}
                </Menu>
              </MastContent>
            </Masthead>

            <Panel>
              <PanelBody>
                <Card>
                  <CardTitle>Resumen - Documento de Valores</CardTitle>
                  <CardGap $h={147} />
                  <Summary>
                    <SummaryRow $h={19} $lh={20} $head><SummaryCell $head>Detalle</SummaryCell><SummaryCell $head>Tipo de Documento</SummaryCell></SummaryRow>
                    {summary.map((s, i) => (
                      <SummaryRow key={i} $h={i === 0 ? 18 : 17} $lh={i === 0 ? 18 : 19} $active={i === 2}><SummaryCell $link>Ver...</SummaryCell><SummaryCell>{s}</SummaryCell></SummaryRow>
                    ))}
                  </Summary>
                  <ExportLink>Exportar Resumen</ExportLink>
                </Card>
              </PanelBody>
              <VScroll>
                <svg width="12" height="17" />
                <Chevron dir="up" color="#7d7d7d" />
                <VThumb />
                <Chevron dir="down" color="#7d7d7d" />
              </VScroll>
              <HScroll>
                <svg width="22" height="12" />
                <Chevron dir="left" color="#7d7d7d" />
                <HThumb />
                <Chevron dir="right" color="#7d7d7d" />
              </HScroll>
            </Panel>

            <Collapser><svg width="8" height="4"><path d="M0 4 4 0l4 4z" fill="#3f4143" /></svg></Collapser>

            <Dialog>
              <DialogHeader>
                <svg width="16" height="17"><path d="M1 1.500h13v14H1z" fill="#fff" stroke="#55595f" strokeWidth="1.300" /><path d="M2 2h2v13H2z" fill="#ffe2a6" /><path d="M4 2v13" stroke="#efa54d" /><circle cx="10" cy="5" r="2.200" fill="none" stroke="#49a94d" strokeWidth="1.200" /><path d="M6 4h1M6 7h1" stroke="#d94040" strokeWidth="1.500" /><path d="M8.500 9.500h7v7h-7z" fill="#8580c2" stroke="#5d58a0" /><path d="M10 11.500h4M10 13h4M10 14.500h4" stroke="#fff" strokeWidth="0.700" /></svg>
                <svg width="15" height="15"><defs><linearGradient id="closebg" x1="0" y1="0" x2="0" y2="1"><stop stopColor="#3d495c" /><stop offset="1" stopColor="#8b9ab5" /></linearGradient></defs><rect x="0.500" y="0.500" width="14" height="14" rx="1.500" fill="url(#closebg)" stroke="#59657b" /><path d="m3.500 3.500 8 8M11.500 3.500l-8 8" stroke="#353b48" strokeWidth="2.600" /><path d="m3.500 3.500 8 8M11.500 3.500l-8 8" stroke="#c6c9cf" strokeWidth="1.200" /></svg>
              </DialogHeader>
              <DialogBody>
                <DialogTitle>Detalle - Cuadre Diario</DialogTitle>
                <Fields>
                  <FieldName $ls={-0.28}>Tipo Movimiento :</FieldName><FieldValue $ls={-0.06}>CONTEOS HOPPER</FieldValue>
                  <FieldName $ls={0.05}>Total :</FieldName><FieldValue $ls={0.1}>46204</FieldValue>
                </Fields>
                <Grid>
                  <GridColumns>
                    <GridRow $h={19}>
                      {heads.map(([h, ls], i) => <HeadCell key={h} $selected={i === 0} $ls={ls}>{h}</HeadCell>)}
                    </GridRow>
                    {rows.map((r, i) => (
                      <GridRow key={r[1]} $h={i === 0 ? 18 : 17}>
                        <Cell $lh={rowLines[i]}>{r[0]}</Cell>
                        <Cell $lh={rowLines[i]}>{r[1]}</Cell>
                        <Cell $lh={rowLines[i]} $ls={-0.28}>31/01/2019</Cell>
                        <Cell $lh={rowLines[i]} $ls={-0.28}>01/02/2019</Cell>
                        <Cell $lh={rowLines[i]}>{r[2]}</Cell>
                        <Cell $lh={rowLines[i]}>{r[3]}</Cell>
                      </GridRow>
                    ))}
                  </GridColumns>
                  <GridScroll>
                    <Chevron dir="up" color="#606060" />
                    <GridThumb />
                    <Chevron dir="down" color="#606060" />
                  </GridScroll>
                </Grid>
              </DialogBody>
              <DialogFooter>
                <svg width="12" height="12"><path d="M1 10v2M3.500 8v4M6 6v6M8.500 4v8M11 1v11" stroke="#9ba4b4" strokeDasharray="1 1" /></svg>
              </DialogFooter>
            </Dialog>
          </AppShell>
        </Page>

        <Taskbar>
          <TaskSlot $w={54}><StartOrb /></TaskSlot>
          <TaskSlot $w={70}><FolderIcon /></TaskSlot>
          <TaskSlot $w={53}><MediaIcon /></TaskSlot>
          <TaskButton $w={54} $ml={6} $stack><ChromeIcon /></TaskButton>
          <TaskButton $ml={8}><MonitorIcon /></TaskButton>
          <TaskSlot $w={64}><CubeIcon /></TaskSlot>
          <TaskSlot $w={64}><ToolsIcon /></TaskSlot>
          <TaskButton $ml={-1}><WindowIcon /></TaskButton>
          <TaskButton $ml={3}><OfficeIcon letter="W" dark="#1b4fa8" light="#a8c4ee" id="word" /></TaskButton>
          <TaskButton $ml={3}><OfficeIcon letter="X" dark="#23803a" light="#a5d79a" id="excel" /></TaskButton>
          <TaskButton $ml={3} $active><IeIcon size={31} id="ietask" /></TaskButton>
          <Tray>
            <Language>ES</Language>
            <TrayIcons>
              <svg width="8" height="5"><path d="M0 4.500 4 0l4 4.500z" fill="#e9f1f4" /></svg>
              <svg width="16" height="16" style={{ marginLeft: 12 }}><path d="M2 1v14" stroke="#fff" strokeWidth="1.500" /><path d="M3 3c3-1 4 0 5 1h6l-3 4.500C8.500 9 7 7.500 3 8z" fill="#fff" /></svg>
              <svg width="18" height="16" style={{ marginLeft: 9 }}><path d="M5.500 3.500h10v7.500h-9M10.500 11v3M7 14.500h8" fill="none" stroke="#fff" strokeWidth="1.400" /><path d="M2 1v3M5 1v3" stroke="#fff" /><path d="M.8 3.500h5.400V6L4.800 7.500H2.200L.8 6z" fill="#fff" /><path d="M3.500 7v7" stroke="#fff" strokeWidth="1.200" /></svg>
              <svg width="14" height="16" style={{ marginLeft: 7 }}><path d="M1 5.500h2.500L7 2v12l-3.500-3.500H1z" fill="#fff" /><path d="M9.500 4.500c2 2 2 5 0 7" fill="none" stroke="#dfe3da" /></svg>
            </TrayIcons>
            <Clock>08:38 p.m.<br />07/02/2019</Clock>
            <ShowDesktop />
          </Tray>
        </Taskbar>
      </Screen>
    </>
  );
}
